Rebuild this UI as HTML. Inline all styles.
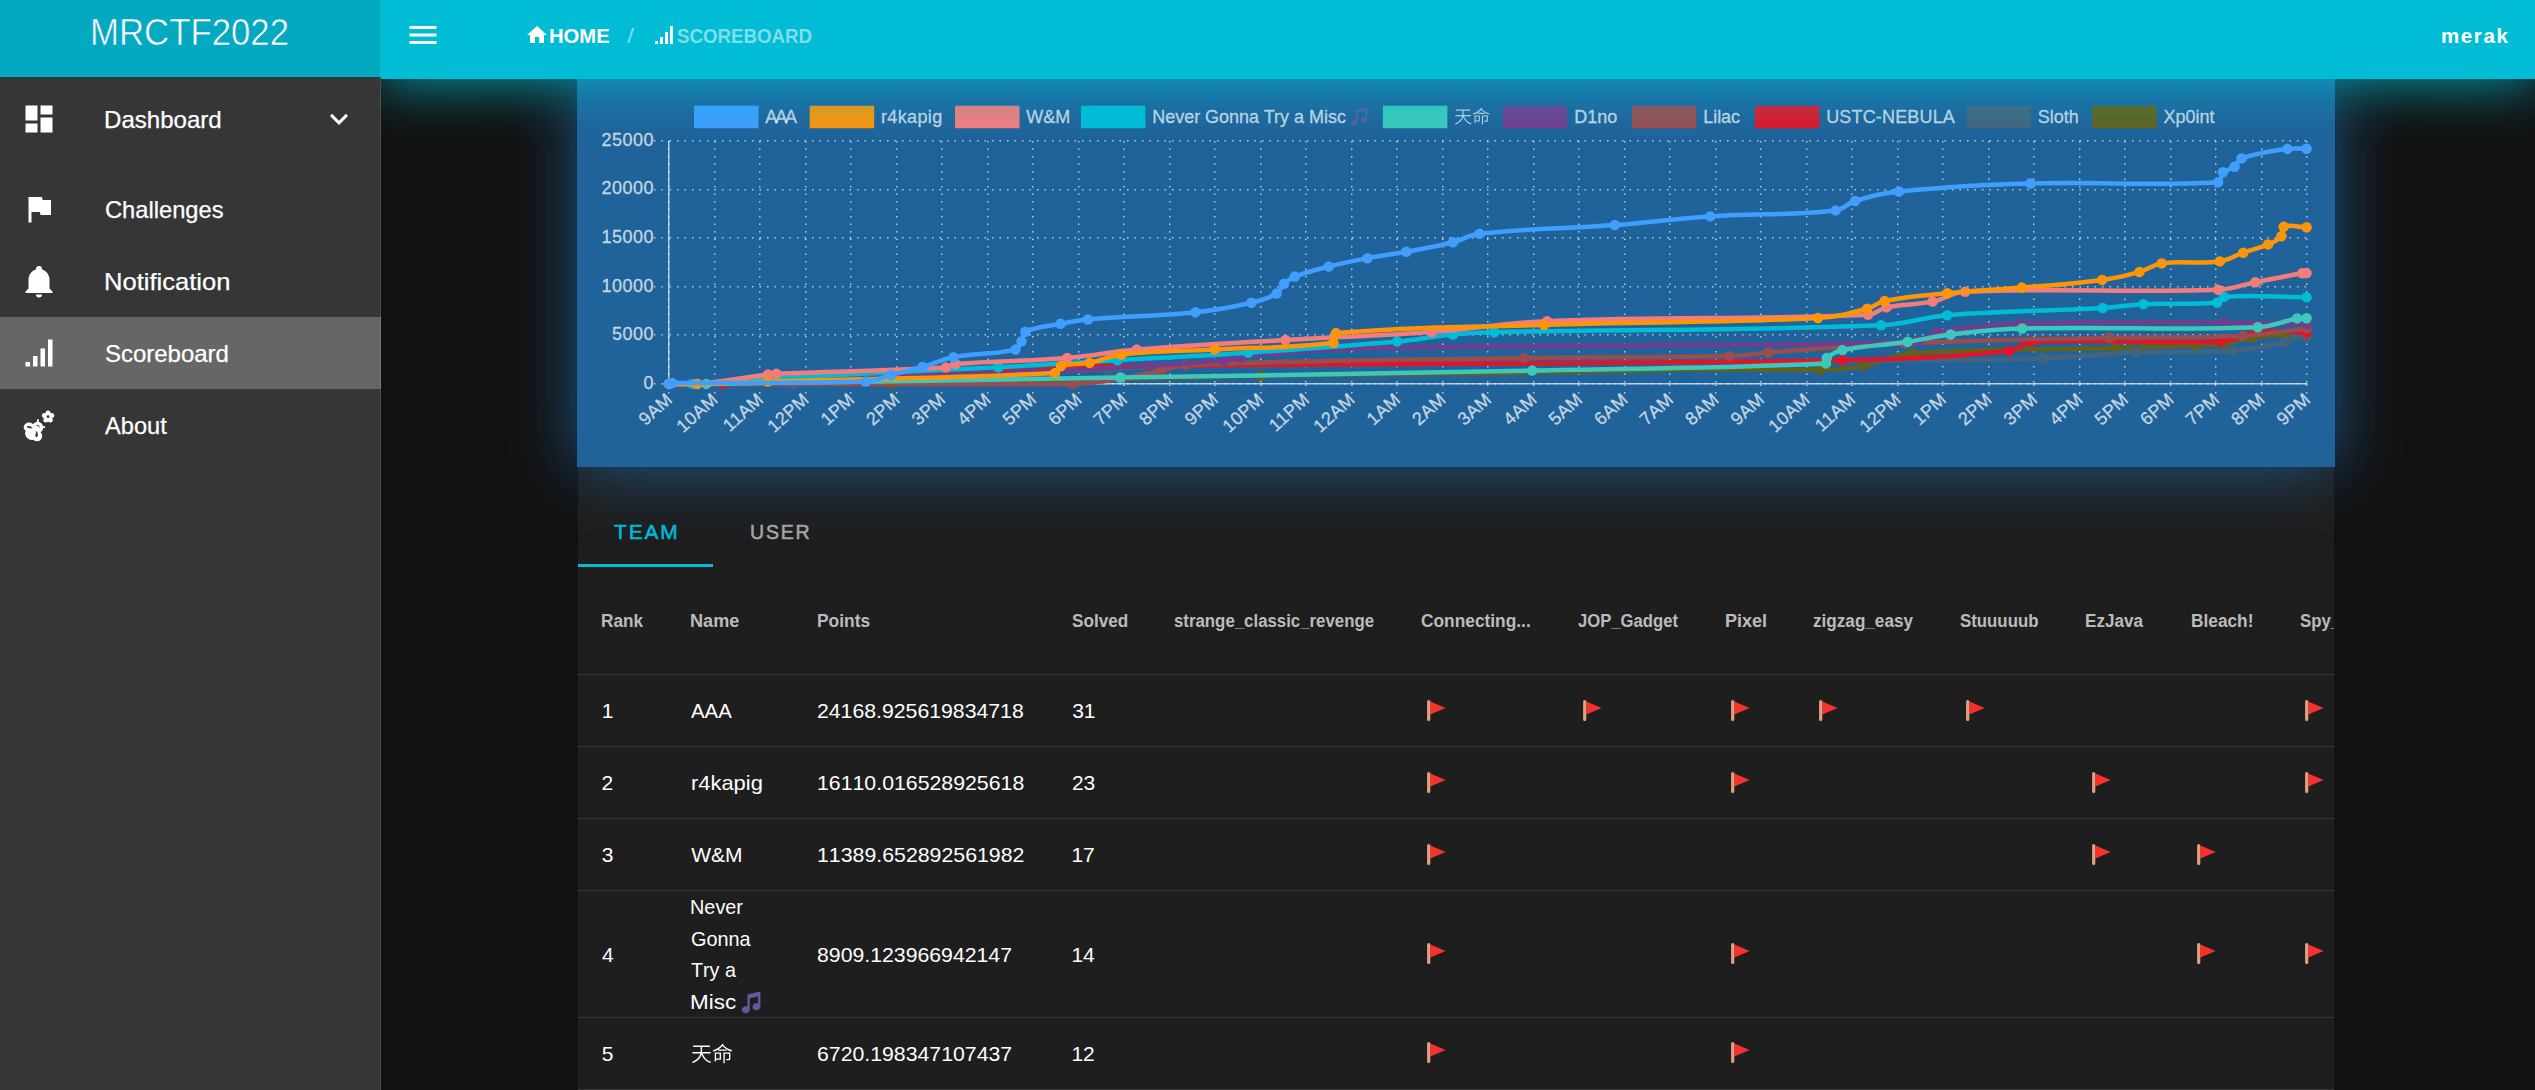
<!DOCTYPE html>
<html lang="en"><head><meta charset="utf-8"><title>MRCTF2022 - Scoreboard</title>
<style>
html,body{margin:0;padding:0;background:#121212}
body{width:2535px;height:1090px;overflow:hidden;position:relative;font-family:"Liberation Sans",sans-serif;color:#fff}
.abs{position:absolute}
.t{position:absolute;white-space:nowrap;transform-origin:0 0;line-height:1;font-kerning:none;display:block;margin:0;font-weight:400}
#drawer{position:absolute;left:0;top:0;width:381px;height:1090px;background:#363636;z-index:6}
#edge{position:absolute;left:380px;top:0;width:1px;height:1090px;background:rgba(255,255,255,.12)}
#brand{position:absolute;left:0;top:0;width:381px;height:77px;background:#03A9C0}
#bar{position:absolute;left:381px;top:0;width:2154px;height:79px;background:#00BCD4;z-index:5;box-shadow:0 0 56px 2px rgba(0,188,212,.85)}
#chartwrap{position:absolute;left:577px;top:79px;width:1758px;height:387.9px;z-index:3;box-shadow:0 0 62px 0 rgba(32,99,155,.86);background:#20639B}
#card{position:absolute;left:578px;top:466px;width:1756px;height:640px;background:#1E1E1E;z-index:1}
.sep{position:absolute;left:0;width:1756px;height:1px;background:#383838}
.tb,.tb thead,.tb tbody,.tb tr{display:block;position:static;margin:0;padding:0;border:0}
.tb th,.tb td{padding:0;text-align:left}
.cell{position:absolute;left:0;top:0;display:block}
.active{position:absolute;left:0;top:317px;width:381px;height:72px;background:#666}
</style></head><body>
<aside id="drawer">
<div id="brand">
<span class="t" style="left:89.55px;top:14.53px;font-size:36px;color:#fff;transform:scale(0.9658,1.0000);-webkit-text-stroke:0.6px #03A9C0;">MRCTF2022</span>
</div>
<div class="active"></div>
<nav>
<svg class="abs" style="left:21.10px;top:101.40px" width="36" height="36" viewBox="0 0 24 24"><path fill="#fff" d="M13,3V9H21V3M13,21H21V11H13M3,21H11V15H3M3,13H11V3H3V13Z"/></svg>
<span class="t" style="left:104.33px;top:108.18px;font-size:24px;color:#fff;transform:scale(1.0027,1.0000);-webkit-text-stroke:0.25px #fff;">Dashboard</span>
<svg class="abs" style="left:21.10px;top:191.20px" width="36" height="36" viewBox="0 0 24 24"><path fill="#fff" d="M14.4,6L14,4H5V21H7V14H12.6L13,16H20V6H14.4Z"/></svg>
<span class="t" style="left:104.50px;top:197.98px;font-size:24px;color:#fff;transform:scale(0.9873,1.0000);-webkit-text-stroke:0.25px #fff;">Challenges</span>
<svg class="abs" style="left:21.10px;top:263.10px" width="36" height="36" viewBox="0 0 24 24"><path fill="#fff" d="M21,19V20H3V19L5,17V11C5,7.9 7.03,5.17 10,4.29C10,4.19 10,4.1 10,4A2,2 0 0,1 12,2A2,2 0 0,1 14,4C14,4.1 14,4.19 14,4.29C16.97,5.17 19,7.9 19,11V17L21,19M14,21A2,2 0 0,1 12,23A2,2 0 0,1 10,21"/></svg>
<span class="t" style="left:103.90px;top:269.88px;font-size:24px;color:#fff;transform:scale(1.0643,1.0000);-webkit-text-stroke:0.25px #fff;">Notification</span>
<svg class="abs" style="left:21.10px;top:335.20px" width="36" height="36" viewBox="0 0 24 24"><path fill="#fff" d="M3,21H6V18H3M8,21H11V14H8M13,21H16V9H13M18,21H21V3H18V21Z"/></svg>
<span class="t" style="left:104.61px;top:341.98px;font-size:24px;color:#fff;transform:scale(0.9988,1.0000);-webkit-text-stroke:0.25px #fff;">Scoreboard</span>
<svg class="abs" style="left:18px;top:404px" width="44" height="42" viewBox="18 404 44 42"><g fill="#fff"><circle cx="48.06" cy="412.95" r="2.5"/><circle cx="51.72" cy="415.61" r="2.5"/><circle cx="50.32" cy="419.91" r="2.5"/><circle cx="45.80" cy="419.91" r="2.5"/><circle cx="44.40" cy="415.61" r="2.5"/><circle cx="48.06" cy="416.8" r="3.2"/><ellipse cx="29.0" cy="427.2" rx="5.3" ry="4.6"/><circle cx="37.6" cy="427.4" r="5.6"/><circle cx="32.0" cy="433.2" r="6.9"/><circle cx="37.0" cy="436.0" r="5.2"/><path d="M37.0,419.3h1.8v3.5h-1.8zM42.2,426.2h2.9v1.8h-2.9z"/></g><g fill="#363636"><circle cx="48.06" cy="416.7" r="1.4"/><path d="M27.2,426.2C29,425.6 31.5,426.6 32.6,428.0C30.8,428.6 28.3,428.3 27.2,427.6Z"/><path d="M36.2,425.0C38.2,424.3 40.2,425.8 39.8,428.6C39.3,426.6 38.0,425.4 36.2,425.6Z"/><path d="M36.5,430.6C37.8,433.0 38.4,435.2 37.6,436.6C36.6,437.6 35.4,436.8 35.4,435.4C35.6,433.6 36.2,432.0 36.5,430.6Z"/></g></svg>
<span class="t" style="left:104.95px;top:413.98px;font-size:24px;color:#fff;transform:scale(0.9841,1.0000);-webkit-text-stroke:0.25px #fff;">About</span>
<svg class="abs" style="left:321.00px;top:101.30px" width="36" height="36" viewBox="0 0 24 24"><path fill="#fff" d="M7.41,8.58L12,13.17L16.59,8.58L18,10L12,16L6,10L7.41,8.58Z"/></svg>
</nav><div id="edge"></div></aside>
<header id="bar">
<svg class="abs" style="left:23.70px;top:17.10px" width="36" height="36" viewBox="0 0 24 24"><path fill="#fff" d="M3,6H21V8H3V6M3,11H21V13H3V11M3,16H21V18H3V16Z"/></svg>
<svg class="abs" style="left:144.30px;top:23.10px" width="24" height="24" viewBox="0 0 24 24"><path fill="#fff" d="M10,20V14H14V20H19V12H22L12,3L2,12H5V20H10Z"/></svg>
<span class="t" style="left:167.75px;top:24.82px;font-size:21px;color:#fff;font-weight:700;transform:scale(0.9642,1.0000);">HOME</span>
<span class="t" style="left:246.20px;top:25.02px;font-size:21px;color:rgba(255,255,255,.5);transform:scale(1.1998,1.0000);">/</span>
<svg class="abs" style="left:271.00px;top:23.10px" width="24" height="24" viewBox="0 0 24 24"><path fill="#fff" d="M3,21H6V18H3M8,21H11V14H8M13,21H16V9H13M18,21H21V3H18V21Z"/></svg>
<span class="t" style="left:295.66px;top:24.82px;font-size:21px;color:rgba(255,255,255,.5);font-weight:700;transform:scale(0.8895,1.0000);">SCOREBOARD</span>
<span class="t" style="left:2059.65px;top:25.22px;font-size:21px;color:#fff;font-weight:700;letter-spacing:1.6px;transform:scale(0.9788,1.0000);">merak</span>
</header>
<section id="chartwrap"></section>
<div class="abs" style="left:0;top:0;z-index:4"><svg class="abs" style="left:577.0px;top:79.0px" width="1758.0" height="387.9" viewBox="577.0 79.0 1758.0 387.9" font-family='"Liberation Sans", sans-serif' font-size="18">
<rect x="577.0" y="79.0" width="1758.0" height="387.9" fill="#20639B"/>
<g stroke="rgba(255,255,255,0.66)" stroke-width="1.5" fill="none">
<path d="M668.75,140.7V384.6M668.15,383.75H2307.65"/>
</g>
<g stroke="rgba(255,255,255,0.66)" stroke-width="1.5" stroke-dasharray="1.5 6" fill="none">
<path d="M668.75,141.1V383.85M668.75,384.5V398.85M714.75,141.1V383.85M714.75,384.5V398.85M759.75,141.1V383.85M759.75,384.5V398.85M805.75,141.1V383.85M805.75,384.5V398.85M850.75,141.1V383.85M850.75,384.5V398.85M896.75,141.1V383.85M896.75,384.5V398.85M941.75,141.1V383.85M941.75,384.5V398.85M987.75,141.1V383.85M987.75,384.5V398.85M1032.75,141.1V383.85M1032.75,384.5V398.85M1078.75,141.1V383.85M1078.75,384.5V398.85M1123.75,141.1V383.85M1123.75,384.5V398.85M1169.75,141.1V383.85M1169.75,384.5V398.85M1214.75,141.1V383.85M1214.75,384.5V398.85M1260.75,141.1V383.85M1260.75,384.5V398.85M1305.75,141.1V383.85M1305.75,384.5V398.85M1351.75,141.1V383.85M1351.75,384.5V398.85M1396.75,141.1V383.85M1396.75,384.5V398.85M1442.75,141.1V383.85M1442.75,384.5V398.85M1487.75,141.1V383.85M1487.75,384.5V398.85M1533.75,141.1V383.85M1533.75,384.5V398.85M1578.75,141.1V383.85M1578.75,384.5V398.85M1624.75,141.1V383.85M1624.75,384.5V398.85M1669.75,141.1V383.85M1669.75,384.5V398.85M1715.75,141.1V383.85M1715.75,384.5V398.85M1760.75,141.1V383.85M1760.75,384.5V398.85M1806.75,141.1V383.85M1806.75,384.5V398.85M1851.75,141.1V383.85M1851.75,384.5V398.85M1897.75,141.1V383.85M1897.75,384.5V398.85M1942.75,141.1V383.85M1942.75,384.5V398.85M1988.75,141.1V383.85M1988.75,384.5V398.85M2033.75,141.1V383.85M2033.75,384.5V398.85M2079.75,141.1V383.85M2079.75,384.5V398.85M2124.75,141.1V383.85M2124.75,384.5V398.85M2170.75,141.1V383.85M2170.75,384.5V398.85M2215.75,141.1V383.85M2215.75,384.5V398.85M2261.75,141.1V383.85M2261.75,384.5V398.85M2306.75,141.1V383.85M2306.75,384.5V398.85M653.90,383.75H668.15M669.50,383.75H2306.9M653.90,334.75H668.15M669.50,334.75H2306.9M653.90,286.75H668.15M669.50,286.75H2306.9M653.90,237.75H668.15M669.50,237.75H2306.9M653.90,189.75H668.15M669.50,189.75H2306.9M653.90,140.75H668.15M669.50,140.75H2306.9"/>
</g>
<g fill="rgba(255,255,255,0.70)" stroke="rgba(255,255,255,0.70)" stroke-width="0.3" text-anchor="end">
<text x="653.9" y="388.85" letter-spacing="0.49">0</text>
<text x="653.9" y="340.22" letter-spacing="0.49">5000</text>
<text x="653.9" y="291.59" letter-spacing="0.49">10000</text>
<text x="653.9" y="242.96" letter-spacing="0.49">15000</text>
<text x="653.9" y="194.33" letter-spacing="0.49">20000</text>
<text x="653.9" y="145.70" letter-spacing="0.49">25000</text>
</g>
<g fill="rgba(255,255,255,0.70)" stroke="rgba(255,255,255,0.70)" stroke-width="0.3" text-anchor="end">
<text transform="translate(668.90,396.35) rotate(-42.27)" x="0" y="6.45"><tspan letter-spacing="0.49">9</tspan>AM</text>
<text transform="translate(714.40,396.35) rotate(-42.27)" x="0" y="6.45"><tspan letter-spacing="0.49">10</tspan>AM</text>
<text transform="translate(759.90,396.35) rotate(-42.27)" x="0" y="6.45"><tspan letter-spacing="0.49">11</tspan>AM</text>
<text transform="translate(805.40,396.35) rotate(-42.27)" x="0" y="6.45"><tspan letter-spacing="0.49">12</tspan>PM</text>
<text transform="translate(850.90,396.35) rotate(-42.27)" x="0" y="6.45"><tspan letter-spacing="0.49">1</tspan>PM</text>
<text transform="translate(896.40,396.35) rotate(-42.27)" x="0" y="6.45"><tspan letter-spacing="0.49">2</tspan>PM</text>
<text transform="translate(941.90,396.35) rotate(-42.27)" x="0" y="6.45"><tspan letter-spacing="0.49">3</tspan>PM</text>
<text transform="translate(987.40,396.35) rotate(-42.27)" x="0" y="6.45"><tspan letter-spacing="0.49">4</tspan>PM</text>
<text transform="translate(1032.90,396.35) rotate(-42.27)" x="0" y="6.45"><tspan letter-spacing="0.49">5</tspan>PM</text>
<text transform="translate(1078.40,396.35) rotate(-42.27)" x="0" y="6.45"><tspan letter-spacing="0.49">6</tspan>PM</text>
<text transform="translate(1123.90,396.35) rotate(-42.27)" x="0" y="6.45"><tspan letter-spacing="0.49">7</tspan>PM</text>
<text transform="translate(1169.40,396.35) rotate(-42.27)" x="0" y="6.45"><tspan letter-spacing="0.49">8</tspan>PM</text>
<text transform="translate(1214.90,396.35) rotate(-42.27)" x="0" y="6.45"><tspan letter-spacing="0.49">9</tspan>PM</text>
<text transform="translate(1260.40,396.35) rotate(-42.27)" x="0" y="6.45"><tspan letter-spacing="0.49">10</tspan>PM</text>
<text transform="translate(1305.90,396.35) rotate(-42.27)" x="0" y="6.45"><tspan letter-spacing="0.49">11</tspan>PM</text>
<text transform="translate(1351.40,396.35) rotate(-42.27)" x="0" y="6.45"><tspan letter-spacing="0.49">12</tspan>AM</text>
<text transform="translate(1396.90,396.35) rotate(-42.27)" x="0" y="6.45"><tspan letter-spacing="0.49">1</tspan>AM</text>
<text transform="translate(1442.40,396.35) rotate(-42.27)" x="0" y="6.45"><tspan letter-spacing="0.49">2</tspan>AM</text>
<text transform="translate(1487.90,396.35) rotate(-42.27)" x="0" y="6.45"><tspan letter-spacing="0.49">3</tspan>AM</text>
<text transform="translate(1533.40,396.35) rotate(-42.27)" x="0" y="6.45"><tspan letter-spacing="0.49">4</tspan>AM</text>
<text transform="translate(1578.90,396.35) rotate(-42.27)" x="0" y="6.45"><tspan letter-spacing="0.49">5</tspan>AM</text>
<text transform="translate(1624.40,396.35) rotate(-42.27)" x="0" y="6.45"><tspan letter-spacing="0.49">6</tspan>AM</text>
<text transform="translate(1669.90,396.35) rotate(-42.27)" x="0" y="6.45"><tspan letter-spacing="0.49">7</tspan>AM</text>
<text transform="translate(1715.40,396.35) rotate(-42.27)" x="0" y="6.45"><tspan letter-spacing="0.49">8</tspan>AM</text>
<text transform="translate(1760.90,396.35) rotate(-42.27)" x="0" y="6.45"><tspan letter-spacing="0.49">9</tspan>AM</text>
<text transform="translate(1806.40,396.35) rotate(-42.27)" x="0" y="6.45"><tspan letter-spacing="0.49">10</tspan>AM</text>
<text transform="translate(1851.90,396.35) rotate(-42.27)" x="0" y="6.45"><tspan letter-spacing="0.49">11</tspan>AM</text>
<text transform="translate(1897.40,396.35) rotate(-42.27)" x="0" y="6.45"><tspan letter-spacing="0.49">12</tspan>PM</text>
<text transform="translate(1942.90,396.35) rotate(-42.27)" x="0" y="6.45"><tspan letter-spacing="0.49">1</tspan>PM</text>
<text transform="translate(1988.40,396.35) rotate(-42.27)" x="0" y="6.45"><tspan letter-spacing="0.49">2</tspan>PM</text>
<text transform="translate(2033.90,396.35) rotate(-42.27)" x="0" y="6.45"><tspan letter-spacing="0.49">3</tspan>PM</text>
<text transform="translate(2079.40,396.35) rotate(-42.27)" x="0" y="6.45"><tspan letter-spacing="0.49">4</tspan>PM</text>
<text transform="translate(2124.90,396.35) rotate(-42.27)" x="0" y="6.45"><tspan letter-spacing="0.49">5</tspan>PM</text>
<text transform="translate(2170.40,396.35) rotate(-42.27)" x="0" y="6.45"><tspan letter-spacing="0.49">6</tspan>PM</text>
<text transform="translate(2215.90,396.35) rotate(-42.27)" x="0" y="6.45"><tspan letter-spacing="0.49">7</tspan>PM</text>
<text transform="translate(2261.40,396.35) rotate(-42.27)" x="0" y="6.45"><tspan letter-spacing="0.49">8</tspan>PM</text>
<text transform="translate(2306.90,396.35) rotate(-42.27)" x="0" y="6.45"><tspan letter-spacing="0.49">9</tspan>PM</text>
</g>
<path d="M668.9,383.9C757.9,383.9 802.4,383.9 891.4,383.9C1039.1,381.8 1112.9,378.4 1260.6,375.8C1352.3,374.2 1398.2,374.8 1490.0,373.5C1574.0,372.3 1616.0,370.5 1700.0,369.6C1748.2,369.1 1772.3,370.8 1820.4,369.8C1837.7,369.4 1846.5,369.2 1863.5,366.1C1883.2,362.6 1892.1,354.7 1912.0,353.3C1992.5,347.5 2033.5,350.4 2114.5,348.0C2147.2,347.0 2163.6,346.3 2196.3,345.0C2207.1,344.6 2212.7,345.1 2223.4,343.7C2235.1,342.2 2240.6,339.3 2252.3,337.7C2265.7,335.8 2272.6,335.2 2286.2,335.0C2294.4,334.9 2298.4,336.1 2306.6,336.8" fill="none" stroke="#63621B" stroke-width="4.5" stroke-linejoin="miter"/>
<g fill="#63621B"><circle cx="668.9" cy="383.9" r="5.25"/><circle cx="891.4" cy="383.9" r="5.25"/><circle cx="1260.6" cy="375.8" r="5.25"/><circle cx="1820.4" cy="369.8" r="5.25"/><circle cx="1863.5" cy="366.1" r="5.25"/><circle cx="1912.0" cy="353.3" r="5.25"/><circle cx="2114.5" cy="348.0" r="5.25"/><circle cx="2196.3" cy="345.0" r="5.25"/><circle cx="2223.4" cy="343.7" r="5.25"/><circle cx="2252.3" cy="337.7" r="5.25"/><circle cx="2286.2" cy="335.0" r="5.25"/><circle cx="2306.6" cy="336.8" r="5.25"/></g>
<path d="M668.9,383.9C718.5,383.9 743.3,383.9 792.9,383.9C885.8,380.6 932.2,375.4 1025.1,371.3C1058.5,369.8 1075.3,371.1 1108.7,369.8C1125.3,369.2 1133.4,366.9 1150.0,366.6C1290.0,364.4 1360.0,364.8 1500.0,363.6C1660.0,362.3 1740.0,362.0 1900.0,360.4C1957.1,359.8 1985.7,360.2 2042.8,358.3C2080.2,357.0 2098.8,353.9 2136.2,352.4C2174.9,350.8 2194.4,353.2 2233.0,350.6C2254.1,349.2 2264.9,347.1 2285.3,342.3C2289.9,341.2 2291.0,337.1 2295.4,335.9C2299.5,334.7 2302.1,336.1 2306.6,336.3" fill="none" stroke="#44647E" stroke-width="4.5" stroke-linejoin="miter"/>
<g fill="#44647E"><circle cx="668.9" cy="383.9" r="5.25"/><circle cx="792.9" cy="383.9" r="5.25"/><circle cx="1025.1" cy="371.3" r="5.25"/><circle cx="1108.7" cy="369.8" r="5.25"/><circle cx="2042.8" cy="358.3" r="5.25"/><circle cx="2136.2" cy="352.4" r="5.25"/><circle cx="2233.0" cy="350.6" r="5.25"/><circle cx="2285.3" cy="342.3" r="5.25"/><circle cx="2295.4" cy="335.9" r="5.25"/><circle cx="2306.6" cy="336.3" r="5.25"/></g>
<path d="M668.9,383.9C690.6,383.9 701.4,383.9 723.1,383.9C836.6,380.0 893.4,377.6 1006.8,372.3C1042.1,370.7 1059.7,367.1 1095.0,366.6C1393.9,362.3 1543.5,365.3 1842.4,360.2C1909.2,359.1 1943.2,357.4 2009.3,351.0C2018.7,350.1 2021.8,342.2 2031.3,341.8C2106.6,338.4 2145.6,344.7 2221.1,341.4C2235.9,340.8 2242.4,333.4 2257.0,331.9C2276.6,329.9 2286.8,332.4 2306.6,332.7" fill="none" stroke="#DF1629" stroke-width="4.5" stroke-linejoin="miter"/>
<g fill="#DF1629"><circle cx="668.9" cy="383.9" r="5.25"/><circle cx="723.1" cy="383.9" r="5.25"/><circle cx="1006.8" cy="372.3" r="5.25"/><circle cx="1095.0" cy="366.6" r="5.25"/><circle cx="1842.4" cy="360.2" r="5.25"/><circle cx="2009.3" cy="351.0" r="5.25"/><circle cx="2031.3" cy="341.8" r="5.25"/><circle cx="2221.1" cy="341.4" r="5.25"/><circle cx="2257.0" cy="331.9" r="5.25"/><circle cx="2306.6" cy="332.7" r="5.25"/></g>
<path d="M668.9,383.9C830.5,383.9 911.6,383.9 1072.9,383.9C1108.5,382.9 1125.9,376.6 1161.0,370.7C1170.9,369.0 1175.3,365.2 1185.3,364.8C1320.2,360.0 1388.0,360.1 1523.2,357.9C1605.7,356.6 1647.0,357.9 1729.5,356.1C1745.2,355.7 1752.9,353.5 1768.5,352.4C1823.1,348.5 1850.3,345.8 1905.0,343.4C1986.7,339.9 2027.7,339.5 2109.5,337.7C2162.8,336.5 2189.5,338.4 2242.7,335.9C2268.4,334.7 2281.0,331.5 2306.6,328.5" fill="none" stroke="#9A4D4F" stroke-width="4.5" stroke-linejoin="miter"/>
<g fill="#9A4D4F"><circle cx="668.9" cy="383.9" r="5.25"/><circle cx="1072.9" cy="383.9" r="5.25"/><circle cx="1161.0" cy="370.7" r="5.25"/><circle cx="1185.3" cy="364.8" r="5.25"/><circle cx="1523.2" cy="357.9" r="5.25"/><circle cx="1729.5" cy="356.1" r="5.25"/><circle cx="1768.5" cy="352.4" r="5.25"/><circle cx="1905.0" cy="343.4" r="5.25"/><circle cx="2109.5" cy="337.7" r="5.25"/><circle cx="2242.7" cy="335.9" r="5.25"/><circle cx="2306.6" cy="328.5" r="5.25"/></g>
<path d="M668.9,383.9C758.5,380.6 803.4,378.7 893.0,375.8C948.5,374.0 976.3,374.2 1031.8,372.0C1079.1,370.1 1102.7,368.6 1150.0,365.7C1179.6,363.9 1194.4,362.7 1223.9,360.2C1230.5,359.6 1233.8,358.8 1240.4,357.9C1254.9,355.9 1262.1,353.9 1276.7,352.8C1317.9,349.8 1338.6,348.6 1380.0,347.8C1508.0,345.4 1572.0,346.6 1700.0,345.0C1787.0,343.9 1831.2,345.5 1917.5,340.9C1926.2,340.4 1929.1,333.6 1937.7,332.2C1970.6,326.7 1987.7,324.6 2021.2,323.5C2102.3,320.8 2143.1,322.4 2224.3,322.5C2257.2,322.5 2273.7,323.3 2306.6,323.8" fill="none" stroke="#733D8E" stroke-width="4.5" stroke-linejoin="miter"/>
<g fill="#733D8E"><circle cx="668.9" cy="383.9" r="5.25"/><circle cx="893.0" cy="375.8" r="5.25"/><circle cx="1031.8" cy="372.0" r="5.25"/><circle cx="1150.0" cy="365.7" r="5.25"/><circle cx="1223.9" cy="360.2" r="5.25"/><circle cx="1240.4" cy="357.9" r="5.25"/><circle cx="1276.7" cy="352.8" r="5.25"/><circle cx="1917.5" cy="340.9" r="5.25"/><circle cx="1937.7" cy="332.2" r="5.25"/><circle cx="2021.2" cy="323.5" r="5.25"/><circle cx="2224.3" cy="322.5" r="5.25"/><circle cx="2306.6" cy="323.8" r="5.25"/></g>
<path d="M668.9,383.9C683.8,383.9 691.3,383.9 706.2,383.9C871.8,381.6 954.6,380.3 1120.2,377.6C1285.0,375.0 1367.4,373.9 1532.2,370.6C1649.7,368.2 1710.3,368.4 1825.9,363.4C1828.1,363.3 1825.2,359.2 1826.8,357.9C1831.8,353.9 1835.6,351.4 1842.4,350.1C1868.0,345.0 1881.6,345.6 1907.7,341.8C1924.9,339.3 1933.3,336.5 1950.6,334.5C1979.1,331.2 1993.4,329.2 2022.1,328.5C2116.3,326.3 2163.9,330.6 2257.8,327.2C2273.9,326.6 2281.4,321.3 2297.2,318.4C2300.9,317.7 2302.8,318.3 2306.6,318.3" fill="none" stroke="#3CC9BC" stroke-width="4.5" stroke-linejoin="miter"/>
<g fill="#3CC9BC"><circle cx="668.9" cy="383.9" r="5.25"/><circle cx="706.2" cy="383.9" r="5.25"/><circle cx="1120.2" cy="377.6" r="5.25"/><circle cx="1532.2" cy="370.6" r="5.25"/><circle cx="1825.9" cy="363.4" r="5.25"/><circle cx="1826.8" cy="357.9" r="5.25"/><circle cx="1842.4" cy="350.1" r="5.25"/><circle cx="1907.7" cy="341.8" r="5.25"/><circle cx="1950.6" cy="334.5" r="5.25"/><circle cx="2022.1" cy="328.5" r="5.25"/><circle cx="2257.8" cy="327.2" r="5.25"/><circle cx="2297.2" cy="318.4" r="5.25"/><circle cx="2306.6" cy="318.3" r="5.25"/></g>
<path d="M668.9,383.9C678.3,383.9 683.0,383.9 692.3,383.9C726.6,382.0 743.7,379.9 778.0,378.0C866.1,373.2 910.2,371.9 998.3,367.3C1046.0,364.8 1069.8,363.0 1117.4,360.2C1169.7,357.1 1195.9,356.2 1248.2,352.7C1307.9,348.7 1337.7,346.7 1397.3,341.4C1419.7,339.4 1430.7,336.6 1453.1,334.5C1469.5,332.9 1477.8,332.6 1494.3,332.2C1648.9,328.9 1726.5,331.1 1880.9,325.3C1907.7,324.3 1920.5,317.3 1947.3,315.2C2009.3,310.4 2040.6,311.5 2102.7,308.0C2119.1,307.1 2127.1,305.0 2143.5,304.2C2173.0,302.8 2188.6,305.2 2217.3,302.6C2220.8,302.3 2220.5,297.0 2224.0,296.8C2256.3,294.8 2273.6,297.0 2306.6,297.2" fill="none" stroke="#00BCD6" stroke-width="4.5" stroke-linejoin="miter"/>
<g fill="#00BCD6"><circle cx="668.9" cy="383.9" r="5.25"/><circle cx="692.3" cy="383.9" r="5.25"/><circle cx="778.0" cy="378.0" r="5.25"/><circle cx="998.3" cy="367.3" r="5.25"/><circle cx="1117.4" cy="360.2" r="5.25"/><circle cx="1248.2" cy="352.7" r="5.25"/><circle cx="1397.3" cy="341.4" r="5.25"/><circle cx="1453.1" cy="334.5" r="5.25"/><circle cx="1494.3" cy="332.2" r="5.25"/><circle cx="1880.9" cy="325.3" r="5.25"/><circle cx="1947.3" cy="315.2" r="5.25"/><circle cx="2102.7" cy="308.0" r="5.25"/><circle cx="2143.5" cy="304.2" r="5.25"/><circle cx="2217.3" cy="302.6" r="5.25"/><circle cx="2224.0" cy="296.8" r="5.25"/><circle cx="2306.6" cy="297.2" r="5.25"/></g>
<path d="M668.9,383.9C680.2,383.9 685.9,383.9 697.2,383.9C725.6,381.2 739.7,378.1 768.1,374.5C771.4,374.1 773.1,373.8 776.4,373.7C844.2,371.0 878.3,371.2 945.9,367.5C949.9,367.3 951.4,364.3 955.4,364.0C999.9,360.5 1022.6,361.5 1067.2,358.0C1095.1,355.8 1108.8,351.9 1136.7,349.6C1196.1,344.7 1226.0,343.6 1285.5,340.0C1343.9,336.5 1373.2,336.2 1431.6,332.0C1477.9,328.7 1500.8,323.0 1547.1,321.2C1675.4,316.1 1740.2,320.0 1868.1,314.8C1876.0,314.5 1878.7,309.0 1886.4,307.4C1904.5,303.7 1914.4,305.2 1932.6,301.6C1945.9,299.0 1951.6,292.4 1965.1,291.8C2065.8,287.6 2117.2,293.1 2218.2,289.8C2233.3,289.3 2240.5,285.1 2255.4,282.2C2274.1,278.5 2283.5,276.6 2302.3,273.3C2304.0,273.0 2304.9,273.2 2306.6,273.1" fill="none" stroke="#F57C7C" stroke-width="4.5" stroke-linejoin="miter"/>
<g fill="#F57C7C"><circle cx="668.9" cy="383.9" r="5.25"/><circle cx="697.2" cy="383.9" r="5.25"/><circle cx="768.1" cy="374.5" r="5.25"/><circle cx="776.4" cy="373.7" r="5.25"/><circle cx="945.9" cy="367.5" r="5.25"/><circle cx="955.4" cy="364.0" r="5.25"/><circle cx="1067.2" cy="358.0" r="5.25"/><circle cx="1136.7" cy="349.6" r="5.25"/><circle cx="1285.5" cy="340.0" r="5.25"/><circle cx="1431.6" cy="332.0" r="5.25"/><circle cx="1547.1" cy="321.2" r="5.25"/><circle cx="1868.1" cy="314.8" r="5.25"/><circle cx="1886.4" cy="307.4" r="5.25"/><circle cx="1932.6" cy="301.6" r="5.25"/><circle cx="1965.1" cy="291.8" r="5.25"/><circle cx="2218.2" cy="289.8" r="5.25"/><circle cx="2255.4" cy="282.2" r="5.25"/><circle cx="2302.3" cy="273.3" r="5.25"/><circle cx="2306.6" cy="273.1" r="5.25"/></g>
<path d="M668.9,383.9C680.2,383.9 685.9,383.9 697.2,383.9C725.4,383.2 739.5,382.5 767.7,381.6C882.6,378.1 941.3,379.0 1055.0,373.0C1058.6,372.8 1057.7,367.1 1061.0,366.1C1071.5,363.0 1078.3,365.0 1089.6,362.9C1102.4,360.5 1108.2,356.1 1121.1,354.7C1158.3,350.7 1177.4,351.5 1214.9,349.4C1262.3,346.7 1288.7,348.8 1333.4,342.8C1337.2,342.3 1332.1,333.4 1336.0,333.1C1416.4,326.3 1460.8,327.5 1544.1,324.9C1653.6,321.5 1708.7,323.4 1817.9,318.0C1837.9,317.0 1847.9,313.7 1867.2,308.8C1874.5,306.9 1877.2,302.4 1884.6,301.0C1909.2,296.2 1922.2,295.8 1947.3,293.3C1977.0,290.4 1992.0,290.2 2021.8,287.6C2053.9,284.8 2070.2,284.1 2102.1,279.9C2117.2,277.9 2124.8,276.2 2139.4,272.1C2148.6,269.6 2152.3,264.6 2161.7,263.4C2184.5,260.4 2197.0,264.4 2219.8,261.4C2229.6,260.1 2233.8,256.0 2243.2,252.7C2253.1,249.2 2258.5,248.5 2268.1,244.4C2273.8,241.9 2277.6,240.6 2281.4,236.2C2283.8,233.5 2280.7,227.8 2283.7,226.7C2290.8,224.2 2297.4,227.1 2306.6,227.3" fill="none" stroke="#FD9509" stroke-width="4.5" stroke-linejoin="miter"/>
<g fill="#FD9509"><circle cx="668.9" cy="383.9" r="5.25"/><circle cx="697.2" cy="383.9" r="5.25"/><circle cx="767.7" cy="381.6" r="5.25"/><circle cx="1055.0" cy="373.0" r="5.25"/><circle cx="1061.0" cy="366.1" r="5.25"/><circle cx="1089.6" cy="362.9" r="5.25"/><circle cx="1121.1" cy="354.7" r="5.25"/><circle cx="1214.9" cy="349.4" r="5.25"/><circle cx="1333.4" cy="342.8" r="5.25"/><circle cx="1336.0" cy="333.1" r="5.25"/><circle cx="1544.1" cy="324.9" r="5.25"/><circle cx="1817.9" cy="318.0" r="5.25"/><circle cx="1867.2" cy="308.8" r="5.25"/><circle cx="1884.6" cy="301.0" r="5.25"/><circle cx="1947.3" cy="293.3" r="5.25"/><circle cx="2021.8" cy="287.6" r="5.25"/><circle cx="2102.1" cy="279.9" r="5.25"/><circle cx="2139.4" cy="272.1" r="5.25"/><circle cx="2161.7" cy="263.4" r="5.25"/><circle cx="2219.8" cy="261.4" r="5.25"/><circle cx="2243.2" cy="252.7" r="5.25"/><circle cx="2268.1" cy="244.4" r="5.25"/><circle cx="2281.4" cy="236.2" r="5.25"/><circle cx="2283.7" cy="226.7" r="5.25"/><circle cx="2306.6" cy="227.3" r="5.25"/></g>
<path d="M668.9,383.9C670.2,383.6 670.8,383.1 672.2,383.1C749.6,382.2 788.7,383.9 865.9,381.6C876.3,381.2 881.1,377.5 891.2,374.9C903.7,371.7 910.1,370.5 922.5,367.0C935.0,363.4 940.8,359.6 953.5,357.2C977.9,352.6 992.0,355.0 1015.4,349.6C1019.2,348.7 1019.5,344.9 1021.5,341.4C1023.5,337.8 1021.8,333.3 1025.3,331.7C1037.4,326.2 1046.4,326.6 1060.6,323.8C1071.4,321.7 1076.9,320.4 1087.9,319.5C1130.8,315.8 1152.6,316.7 1195.4,312.3C1218.0,310.0 1229.3,307.9 1251.4,302.8C1261.8,300.4 1267.7,298.8 1276.6,293.6C1280.7,291.2 1280.5,287.1 1284.0,283.8C1287.7,280.3 1289.9,278.4 1294.7,276.6C1307.8,271.6 1314.9,270.1 1328.6,266.6C1344.0,262.7 1351.9,261.2 1367.5,258.2C1383.0,255.2 1390.9,254.6 1406.4,251.7C1425.1,248.2 1434.6,246.8 1453.1,242.2C1463.9,239.6 1468.5,234.9 1479.5,233.7C1533.2,228.0 1560.7,229.2 1614.7,225.1C1652.9,222.2 1671.9,218.9 1710.2,216.4C1760.3,213.1 1786.2,215.7 1835.6,210.4C1844.1,209.5 1846.9,203.5 1855.1,201.0C1872.2,195.9 1881.2,193.3 1899.0,191.5C1951.2,186.3 1977.7,185.1 2030.3,183.6C2105.4,181.4 2145.3,186.5 2218.1,182.2C2222.4,181.9 2219.9,175.1 2222.9,172.3C2226.5,169.0 2230.6,169.8 2234.6,166.8C2238.0,164.3 2237.5,159.7 2241.5,158.4C2258.7,152.6 2269.0,151.6 2287.5,148.9C2295.0,147.8 2299.0,148.8 2306.6,148.8" fill="none" stroke="#409EFF" stroke-width="4.5" stroke-linejoin="miter"/>
<g fill="#409EFF"><circle cx="668.9" cy="383.9" r="5.25"/><circle cx="672.2" cy="383.1" r="5.25"/><circle cx="865.9" cy="381.6" r="5.25"/><circle cx="891.2" cy="374.9" r="5.25"/><circle cx="922.5" cy="367.0" r="5.25"/><circle cx="953.5" cy="357.2" r="5.25"/><circle cx="1015.4" cy="349.6" r="5.25"/><circle cx="1021.5" cy="341.4" r="5.25"/><circle cx="1025.3" cy="331.7" r="5.25"/><circle cx="1060.6" cy="323.8" r="5.25"/><circle cx="1087.9" cy="319.5" r="5.25"/><circle cx="1195.4" cy="312.3" r="5.25"/><circle cx="1251.4" cy="302.8" r="5.25"/><circle cx="1276.6" cy="293.6" r="5.25"/><circle cx="1284.0" cy="283.8" r="5.25"/><circle cx="1294.7" cy="276.6" r="5.25"/><circle cx="1328.6" cy="266.6" r="5.25"/><circle cx="1367.5" cy="258.2" r="5.25"/><circle cx="1406.4" cy="251.7" r="5.25"/><circle cx="1453.1" cy="242.2" r="5.25"/><circle cx="1479.5" cy="233.7" r="5.25"/><circle cx="1614.7" cy="225.1" r="5.25"/><circle cx="1710.2" cy="216.4" r="5.25"/><circle cx="1835.6" cy="210.4" r="5.25"/><circle cx="1855.1" cy="201.0" r="5.25"/><circle cx="1899.0" cy="191.5" r="5.25"/><circle cx="2030.3" cy="183.6" r="5.25"/><circle cx="2218.1" cy="182.2" r="5.25"/><circle cx="2222.9" cy="172.3" r="5.25"/><circle cx="2234.6" cy="166.8" r="5.25"/><circle cx="2241.5" cy="158.4" r="5.25"/><circle cx="2287.5" cy="148.9" r="5.25"/><circle cx="2306.6" cy="148.8" r="5.25"/></g>
<rect x="694.0" y="105.75" width="64.5" height="22.5" fill="#409EFF"/>
<text x="765.25" y="123.4" fill="rgba(255,255,255,0.70)" stroke="rgba(255,255,255,0.70)" stroke-width="0.3" letter-spacing="-2.1">AAA</text>
<rect x="809.7" y="105.75" width="64.5" height="22.5" fill="#FD9509"/>
<text x="880.95" y="123.4" fill="rgba(255,255,255,0.70)" stroke="rgba(255,255,255,0.70)" stroke-width="0.3" letter-spacing="0.38">r4kapig</text>
<rect x="955.0" y="105.75" width="64.5" height="22.5" fill="#F57C7C"/>
<text x="1026.25" y="123.4" fill="rgba(255,255,255,0.70)" stroke="rgba(255,255,255,0.70)" stroke-width="0.3">W&amp;M</text>
<rect x="1080.9" y="105.75" width="64.5" height="22.5" fill="#00BCD6"/>
<text x="1152.15" y="123.4" fill="rgba(255,255,255,0.70)" stroke="rgba(255,255,255,0.70)" stroke-width="0.3">Never Gonna Try a Misc</text>
<rect x="1382.9" y="105.75" width="64.5" height="22.5" fill="#3CC9BC"/>
<g fill="rgba(255,255,255,0.70)"><path transform="translate(1454.15,123.10) scale(0.018,-0.018)" d="M67 450V383H440C405 239 307 88 44 -21C58 -35 79 -61 88 -77C349 33 457 185 501 335C580 134 716 -9 918 -77C928 -58 948 -31 964 -17C759 43 620 187 550 383H937V450H523C528 491 529 532 529 570V692H894V759H102V692H459V570C459 532 458 492 452 450Z"/><path transform="translate(1472.15,123.10) scale(0.018,-0.018)" d="M298 574V512H693V574ZM131 425V-1H193V85H431V425ZM193 365H367V146H193ZM542 425V-79H607V365H809V141C809 129 805 125 791 124C776 124 727 124 668 125C676 106 685 81 688 62C765 62 813 62 840 73C867 85 874 104 874 142V425ZM504 850C412 714 221 585 37 534C51 517 67 489 76 469C232 521 394 625 502 743C603 627 763 523 915 474C926 494 947 523 965 539C805 581 633 683 541 789L558 811Z"/></g>
<rect x="1502.9" y="105.75" width="64.5" height="22.5" fill="#733D8E"/>
<text x="1574.15" y="123.4" fill="rgba(255,255,255,0.70)" stroke="rgba(255,255,255,0.70)" stroke-width="0.3">D1no</text>
<rect x="1631.9" y="105.75" width="64.5" height="22.5" fill="#9A4D4F"/>
<text x="1703.15" y="123.4" fill="rgba(255,255,255,0.70)" stroke="rgba(255,255,255,0.70)" stroke-width="0.3">Lilac</text>
<rect x="1754.9" y="105.75" width="64.5" height="22.5" fill="#DF1629"/>
<text x="1826.15" y="123.4" fill="rgba(255,255,255,0.70)" stroke="rgba(255,255,255,0.70)" stroke-width="0.3" letter-spacing="0.18">USTC-NEBULA</text>
<rect x="1966.5" y="105.75" width="64.5" height="22.5" fill="#44647E"/>
<text x="2037.75" y="123.4" fill="rgba(255,255,255,0.70)" stroke="rgba(255,255,255,0.70)" stroke-width="0.3">Sloth</text>
<rect x="2092.2" y="105.75" width="64.5" height="22.5" fill="#63621B"/>
<text x="2163.45" y="123.4" fill="rgba(255,255,255,0.70)" stroke="rgba(255,255,255,0.70)" stroke-width="0.3">Xp0int</text>
<g transform="translate(1348.30,105.20) scale(0.88)" fill="#7A5FA8" opacity="0.55"><path d="M8.2,5.2L21.5,2.2V16.6A3.9,3.5 -15 1 1 19.2,13.4V6.6L10.5,8.6V19.8A3.9,3.5 -15 1 1 8.2,16.6Z"/></g>
</svg></div>
<main id="card">
<div class="abs" style="left:0;top:98.0px;width:135px;height:3px;background:#00BCD4"></div>
<span class="t" style="left:35.83px;top:55.12px;font-size:21px;color:#00BCD4;letter-spacing:1.9px;transform:scale(0.9945,1.0000);-webkit-text-stroke:0.6px #00BCD4;">TEAM</span>
<span class="t" style="left:172.29px;top:55.12px;font-size:21px;color:#A6A6A6;letter-spacing:1.9px;transform:scale(0.9308,1.0000);-webkit-text-stroke:0.6px #A6A6A6;">USER</span>
<div class="sep" style="top:208.0px"></div>
<div class="sep" style="top:280.0px"></div>
<div class="sep" style="top:352.0px"></div>
<div class="sep" style="top:424.0px"></div>
<div class="sep" style="top:551.0px"></div>
<div class="sep" style="top:623.0px"></div>
<div class="abs" style="left:0;top:0;width:1756px;height:624px;overflow:hidden">
<table class="tb"><thead><tr>
<th class="t" style="left:23.45px;top:145.96px;font-size:18px;color:#BBBBBB;font-weight:700;transform:scale(0.9550,1.0000);">Rank</th>
<th class="t" style="left:112.19px;top:145.96px;font-size:18px;color:#BBBBBB;font-weight:700;transform:scale(1.0062,1.0000);">Name</th>
<th class="t" style="left:239.04px;top:145.96px;font-size:18px;color:#BBBBBB;font-weight:700;transform:scale(0.9668,1.0000);">Points</th>
<th class="t" style="left:493.51px;top:145.96px;font-size:18px;color:#BBBBBB;font-weight:700;transform:scale(0.9544,1.0000);">Solved</th>
<th class="t" style="left:596.31px;top:145.96px;font-size:18px;color:#BBBBBB;font-weight:700;transform:scale(0.9343,1.0000);">strange_classic_revenge</th>
<th class="t" style="left:842.99px;top:145.96px;font-size:18px;color:#BBBBBB;font-weight:700;transform:scale(0.9624,1.0000);">Connecting...</th>
<th class="t" style="left:1000.15px;top:145.96px;font-size:18px;color:#BBBBBB;font-weight:700;transform:scale(0.9252,1.0000);">JOP_Gadget</th>
<th class="t" style="left:1146.69px;top:145.96px;font-size:18px;color:#BBBBBB;font-weight:700;transform:scale(1.0012,1.0000);">Pixel</th>
<th class="t" style="left:1235.01px;top:145.96px;font-size:18px;color:#BBBBBB;font-weight:700;transform:scale(0.9517,1.0000);">zigzag_easy</th>
<th class="t" style="left:1382.32px;top:145.96px;font-size:18px;color:#BBBBBB;font-weight:700;transform:scale(0.9345,1.0000);">Stuuuuub</th>
<th class="t" style="left:1507.36px;top:145.96px;font-size:18px;color:#BBBBBB;font-weight:700;transform:scale(0.9506,1.0000);">EzJava</th>
<th class="t" style="left:1612.84px;top:145.96px;font-size:18px;color:#BBBBBB;font-weight:700;transform:scale(0.9597,1.0000);">Bleach!</th>
<th class="t" style="left:1721.52px;top:145.96px;font-size:18px;color:#BBBBBB;font-weight:700;transform:scale(0.9300,1.0000);">Spy_</th>
</tr></thead><tbody>
<tr>
<td class="t" style="left:23.80px;top:234.12px;font-size:21px;color:#fff;">1</td>
<td class="t" style="left:113.36px;top:234.12px;font-size:21px;color:#fff;transform:scale(0.9705,1.0000);">AAA</td>
<td class="t" style="left:239.23px;top:234.12px;font-size:21px;color:#fff;transform:scale(1.0113,1.0000);">24168.925619834718</td>
<td class="t" style="left:494.20px;top:234.12px;font-size:21px;color:#fff;">31</td>
<td class="cell"><svg class="abs" style="left:847.80px;top:232.80px" width="22" height="24" viewBox="-1 -1 22 24"><path d="M3.4,1.6L18.6,8.1L3.4,14.6Z" fill="#F8312F"/><rect x="0.1" y="0.1" width="3.2" height="20.9" rx="1.5" fill="#E3A07E"/></svg></td>
<td class="cell"><svg class="abs" style="left:1004.00px;top:232.80px" width="22" height="24" viewBox="-1 -1 22 24"><path d="M3.4,1.6L18.6,8.1L3.4,14.6Z" fill="#F8312F"/><rect x="0.1" y="0.1" width="3.2" height="20.9" rx="1.5" fill="#E3A07E"/></svg></td>
<td class="cell"><svg class="abs" style="left:1152.20px;top:232.80px" width="22" height="24" viewBox="-1 -1 22 24"><path d="M3.4,1.6L18.6,8.1L3.4,14.6Z" fill="#F8312F"/><rect x="0.1" y="0.1" width="3.2" height="20.9" rx="1.5" fill="#E3A07E"/></svg></td>
<td class="cell"><svg class="abs" style="left:1240.20px;top:232.80px" width="22" height="24" viewBox="-1 -1 22 24"><path d="M3.4,1.6L18.6,8.1L3.4,14.6Z" fill="#F8312F"/><rect x="0.1" y="0.1" width="3.2" height="20.9" rx="1.5" fill="#E3A07E"/></svg></td>
<td class="cell"><svg class="abs" style="left:1386.50px;top:232.80px" width="22" height="24" viewBox="-1 -1 22 24"><path d="M3.4,1.6L18.6,8.1L3.4,14.6Z" fill="#F8312F"/><rect x="0.1" y="0.1" width="3.2" height="20.9" rx="1.5" fill="#E3A07E"/></svg></td>
<td class="cell"><svg class="abs" style="left:1726.20px;top:232.80px" width="22" height="24" viewBox="-1 -1 22 24"><path d="M3.4,1.6L18.6,8.1L3.4,14.6Z" fill="#F8312F"/><rect x="0.1" y="0.1" width="3.2" height="20.9" rx="1.5" fill="#E3A07E"/></svg></td>
</tr>
<tr>
<td class="t" style="left:23.54px;top:306.12px;font-size:21px;color:#fff;">2</td>
<td class="t" style="left:112.54px;top:306.12px;font-size:21px;color:#fff;transform:scale(1.0434,1.0000);">r4kapig</td>
<td class="t" style="left:238.68px;top:306.12px;font-size:21px;color:#fff;transform:scale(1.0140,1.0000);">16110.016528925618</td>
<td class="t" style="left:493.94px;top:306.12px;font-size:21px;color:#fff;">23</td>
<td class="cell"><svg class="abs" style="left:847.80px;top:304.80px" width="22" height="24" viewBox="-1 -1 22 24"><path d="M3.4,1.6L18.6,8.1L3.4,14.6Z" fill="#F8312F"/><rect x="0.1" y="0.1" width="3.2" height="20.9" rx="1.5" fill="#E3A07E"/></svg></td>
<td class="cell"><svg class="abs" style="left:1152.20px;top:304.80px" width="22" height="24" viewBox="-1 -1 22 24"><path d="M3.4,1.6L18.6,8.1L3.4,14.6Z" fill="#F8312F"/><rect x="0.1" y="0.1" width="3.2" height="20.9" rx="1.5" fill="#E3A07E"/></svg></td>
<td class="cell"><svg class="abs" style="left:1512.60px;top:304.80px" width="22" height="24" viewBox="-1 -1 22 24"><path d="M3.4,1.6L18.6,8.1L3.4,14.6Z" fill="#F8312F"/><rect x="0.1" y="0.1" width="3.2" height="20.9" rx="1.5" fill="#E3A07E"/></svg></td>
<td class="cell"><svg class="abs" style="left:1726.20px;top:304.80px" width="22" height="24" viewBox="-1 -1 22 24"><path d="M3.4,1.6L18.6,8.1L3.4,14.6Z" fill="#F8312F"/><rect x="0.1" y="0.1" width="3.2" height="20.9" rx="1.5" fill="#E3A07E"/></svg></td>
</tr>
<tr>
<td class="t" style="left:23.80px;top:378.12px;font-size:21px;color:#fff;">3</td>
<td class="t" style="left:113.31px;top:378.12px;font-size:21px;color:#fff;">W&amp;M</td>
<td class="t" style="left:238.68px;top:378.12px;font-size:21px;color:#fff;transform:scale(1.0147,1.0000);">11389.652892561982</td>
<td class="t" style="left:493.40px;top:378.12px;font-size:21px;color:#fff;">17</td>
<td class="cell"><svg class="abs" style="left:847.80px;top:376.80px" width="22" height="24" viewBox="-1 -1 22 24"><path d="M3.4,1.6L18.6,8.1L3.4,14.6Z" fill="#F8312F"/><rect x="0.1" y="0.1" width="3.2" height="20.9" rx="1.5" fill="#E3A07E"/></svg></td>
<td class="cell"><svg class="abs" style="left:1512.60px;top:376.80px" width="22" height="24" viewBox="-1 -1 22 24"><path d="M3.4,1.6L18.6,8.1L3.4,14.6Z" fill="#F8312F"/><rect x="0.1" y="0.1" width="3.2" height="20.9" rx="1.5" fill="#E3A07E"/></svg></td>
<td class="cell"><svg class="abs" style="left:1618.20px;top:376.80px" width="22" height="24" viewBox="-1 -1 22 24"><path d="M3.4,1.6L18.6,8.1L3.4,14.6Z" fill="#F8312F"/><rect x="0.1" y="0.1" width="3.2" height="20.9" rx="1.5" fill="#E3A07E"/></svg></td>
</tr>
<tr>
<td class="t" style="left:24.12px;top:477.72px;font-size:21px;color:#fff;">4</td>
<td class="cell">
<span class="t" style="left:112.27px;top:430.22px;font-size:21px;color:#fff;transform:scale(0.9454,1.0000);">Never</span>
<span class="t" style="left:112.60px;top:461.62px;font-size:21px;color:#fff;transform:scale(0.9452,1.0000);">Gonna</span>
<span class="t" style="left:112.56px;top:492.82px;font-size:21px;color:#fff;transform:scale(0.9396,1.0000);">Try a</span>
<span class="t" style="left:112.16px;top:524.92px;font-size:21px;color:#fff;transform:scale(1.0689,1.0000);">Misc</span>
<svg class="abs" style="left:161.0px;top:523.6px" width="24" height="24" viewBox="0 0 24 24"><path fill="#63589A" d="M8.4,4.6L21.4,1.6V16.4A4.0,3.6 -15 1 1 19.0,13.2V6.4L10.8,8.3V19.4A4.0,3.6 -15 1 1 8.4,16.2Z"/></svg></td>
<td class="t" style="left:239.38px;top:477.72px;font-size:21px;color:#fff;transform:scale(1.0119,1.0000);">8909.123966942147</td>
<td class="t" style="left:493.40px;top:477.72px;font-size:21px;color:#fff;">14</td>
<td class="cell"><svg class="abs" style="left:847.80px;top:476.40px" width="22" height="24" viewBox="-1 -1 22 24"><path d="M3.4,1.6L18.6,8.1L3.4,14.6Z" fill="#F8312F"/><rect x="0.1" y="0.1" width="3.2" height="20.9" rx="1.5" fill="#E3A07E"/></svg></td>
<td class="cell"><svg class="abs" style="left:1152.20px;top:476.40px" width="22" height="24" viewBox="-1 -1 22 24"><path d="M3.4,1.6L18.6,8.1L3.4,14.6Z" fill="#F8312F"/><rect x="0.1" y="0.1" width="3.2" height="20.9" rx="1.5" fill="#E3A07E"/></svg></td>
<td class="cell"><svg class="abs" style="left:1618.20px;top:476.40px" width="22" height="24" viewBox="-1 -1 22 24"><path d="M3.4,1.6L18.6,8.1L3.4,14.6Z" fill="#F8312F"/><rect x="0.1" y="0.1" width="3.2" height="20.9" rx="1.5" fill="#E3A07E"/></svg></td>
<td class="cell"><svg class="abs" style="left:1726.20px;top:476.40px" width="22" height="24" viewBox="-1 -1 22 24"><path d="M3.4,1.6L18.6,8.1L3.4,14.6Z" fill="#F8312F"/><rect x="0.1" y="0.1" width="3.2" height="20.9" rx="1.5" fill="#E3A07E"/></svg></td>
</tr>
<tr>
<td class="t" style="left:23.76px;top:576.72px;font-size:21px;color:#fff;">5</td>
<td class="cell"><svg class="abs" style="left:112.5px;top:577.0px" width="44" height="24" viewBox="0 0 44 24" fill="#fff"><title>天命</title><path transform="translate(0.0,18.5) scale(0.021,-0.021)" d="M67 450V383H440C405 239 307 88 44 -21C58 -35 79 -61 88 -77C349 33 457 185 501 335C580 134 716 -9 918 -77C928 -58 948 -31 964 -17C759 43 620 187 550 383H937V450H523C528 491 529 532 529 570V692H894V759H102V692H459V570C459 532 458 492 452 450Z"/><path transform="translate(21.0,18.5) scale(0.021,-0.021)" d="M298 574V512H693V574ZM131 425V-1H193V85H431V425ZM193 365H367V146H193ZM542 425V-79H607V365H809V141C809 129 805 125 791 124C776 124 727 124 668 125C676 106 685 81 688 62C765 62 813 62 840 73C867 85 874 104 874 142V425ZM504 850C412 714 221 585 37 534C51 517 67 489 76 469C232 521 394 625 502 743C603 627 763 523 915 474C926 494 947 523 965 539C805 581 633 683 541 789L558 811Z"/></svg></td>
<td class="t" style="left:239.22px;top:576.72px;font-size:21px;color:#fff;transform:scale(1.0127,1.0000);">6720.198347107437</td>
<td class="t" style="left:493.40px;top:576.72px;font-size:21px;color:#fff;">12</td>
<td class="cell"><svg class="abs" style="left:847.80px;top:575.40px" width="22" height="24" viewBox="-1 -1 22 24"><path d="M3.4,1.6L18.6,8.1L3.4,14.6Z" fill="#F8312F"/><rect x="0.1" y="0.1" width="3.2" height="20.9" rx="1.5" fill="#E3A07E"/></svg></td>
<td class="cell"><svg class="abs" style="left:1152.20px;top:575.40px" width="22" height="24" viewBox="-1 -1 22 24"><path d="M3.4,1.6L18.6,8.1L3.4,14.6Z" fill="#F8312F"/><rect x="0.1" y="0.1" width="3.2" height="20.9" rx="1.5" fill="#E3A07E"/></svg></td>
</tr>
</tbody></table>
</div>
</main>
</body></html>
